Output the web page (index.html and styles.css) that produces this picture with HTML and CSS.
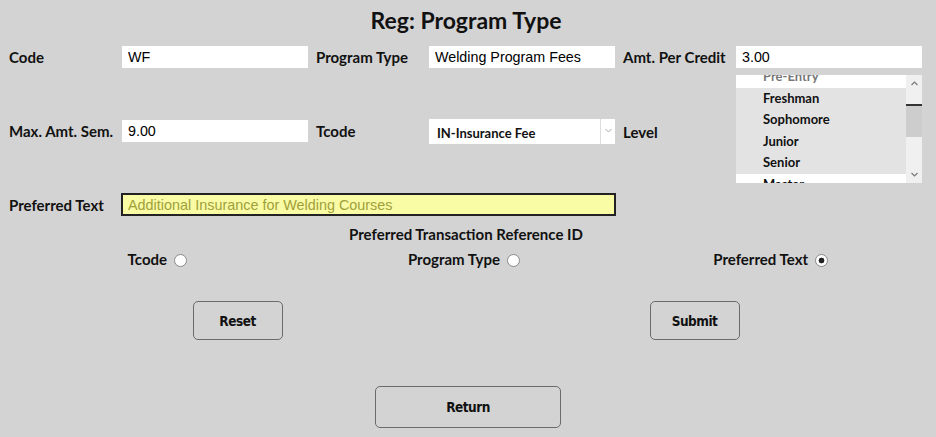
FILE: index.html
```html
<!DOCTYPE html>
<html lang="en">
<head>
    <meta charset="UTF-8">
    <meta name="viewport" content="width=device-width, initial-scale=1.0">
    <title>Reg: Program Type</title>
    <link rel="stylesheet" href="styles.css">
</head>
<body>
    <div class="page">
        <h1 class="title">Reg: Program Type</h1>

        <div class="form-row row-top">
            <div class="field">
                <label>Code</label>
                <input class="text-input" type="text" value="WF">
            </div>
            <div class="field">
                <label>Program Type</label>
                <input class="text-input" type="text" value="Welding Program Fees">
            </div>
            <div class="field">
                <label>Amt. Per Credit</label>
                <input class="text-input" type="text" value="3.00">
            </div>
        </div>

        <div class="form-row row-mid">
            <div class="field shifted">
                <label>Max. Amt. Sem.</label>
                <input class="text-input" type="text" value="9.00">
            </div>
            <div class="field shifted">
                <label>Tcode</label>
                <div class="select-box">
                    <span class="select-value">IN-Insurance Fee</span>
                    <span class="select-arrow">
                        <svg width="7" height="5" viewBox="0 0 7 5"><path d="M0.5 1 L3.5 4 L6.5 1" fill="none" stroke="#a8a8a8" stroke-width="1"/></svg>
                    </span>
                </div>
            </div>
            <div class="field">
                <label class="level-label">Level</label>
                <div class="listbox">
                    <div class="listbox-items">
                        <div class="listbox-track">
                            <div class="opt dim">Pre-Entry</div>
                            <div class="opt sel">Freshman</div>
                            <div class="opt sel">Sophomore</div>
                            <div class="opt sel">Junior</div>
                            <div class="opt sel">Senior</div>
                            <div class="opt">Master</div>
                        </div>
                    </div>
                    <div class="scrollbar">
                        <div class="scroll-btn">
                            <svg width="7" height="5" viewBox="0 0 7 5"><path d="M0.5 4 L3.5 1 L6.5 4" fill="none" stroke="#7a7a7a" stroke-width="1.2"/></svg>
                        </div>
                        <div class="scroll-track">
                            <div class="scroll-thumb"></div>
                        </div>
                        <div class="scroll-btn">
                            <svg width="7" height="5" viewBox="0 0 7 5"><path d="M0.5 1 L3.5 4 L6.5 1" fill="none" stroke="#7a7a7a" stroke-width="1.2"/></svg>
                        </div>
                    </div>
                </div>
            </div>
        </div>

        <div class="form-row row-pref">
            <div class="field field-wide">
                <label>Preferred Text</label>
                <input class="pref-input" type="text" value="Additional Insurance for Welding Courses">
            </div>
        </div>

        <div class="ref-title">Preferred Transaction Reference ID</div>

        <div class="radio-row">
            <label class="radio-item">Tcode <input type="radio" name="ref-id"></label>
            <label class="radio-item">Program Type <input type="radio" name="ref-id"></label>
            <label class="radio-item">Preferred Text <input type="radio" name="ref-id" checked></label>
        </div>

        <div class="button-row">
            <button class="btn">Reset</button>
            <button class="btn">Submit</button>
        </div>

        <div class="return-row">
            <button class="btn btn-return">Return</button>
        </div>
    </div>
</body>
</html>
```

FILE: styles.css
```css
body {
    margin: 0;
    background-color: #d3d3d3;
    font-family: Lato, "Noto Sans", sans-serif;
    color: #111;
}

.page {
    padding: 0 13px 0 9px;
}

.title {
    margin: 0;
    padding-top: 7px;
    padding-bottom: 1px;
    font-size: 23px;
    line-height: 26px;
    font-weight: bold;
    text-align: center;
}

.form-row {
    display: grid;
    grid-template-columns: repeat(3, 299px);
    column-gap: 8px;
}

.row-top {
    margin-top: 12px;
    height: 22px;
}

.row-mid {
    margin-top: 7px;
    height: 108px;
    align-items: center;
}

.row-pref {
    margin-top: 10px;
    grid-template-columns: 1fr;
}

.field {
    display: flex;
    align-items: center;
}

.field label {
    width: 113px;
    flex-shrink: 0;
    font-size: 15px;
    font-weight: bold;
}

.shifted {
    margin-top: 4px;
}

.level-label {
    margin-top: 6px;
}

.text-input {
    width: 186px;
    height: 22px;
    box-sizing: border-box;
    border: none;
    padding: 0 6px;
    background: #fff;
    font-family: "Liberation Sans", Arial, sans-serif;
    font-size: 14.3px;
    color: #000;
}

/* fake dropdown */
.select-box {
    display: flex;
    width: 186px;
    height: 25px;
    background: #fff;
}

.select-value {
    flex: 1;
    padding: 3px 0 0 8px;
    line-height: 22px;
    font-size: 13px;
    font-weight: bold;
}

.select-arrow {
    width: 14px;
    border-left: 1px solid #dcdcdc;
    display: flex;
    align-items: center;
    justify-content: center;
    padding-bottom: 2px;
}

/* fake multi-select list */
.listbox {
    display: flex;
    width: 186px;
    height: 108px;
    background: #fff;
}

.listbox-items {
    flex: 1;
    overflow: hidden;
}

.listbox-track {
    margin-top: -9px;
}

.opt {
    height: 21.5px;
    line-height: 21.5px;
    padding-left: 27px;
    font-size: 13px;
    font-weight: bold;
}

.opt.dim {
    color: #777;
}

.opt.sel {
    background: #e3e3e3;
}

.scrollbar {
    width: 16px;
    display: flex;
    flex-direction: column;
    background: #f0f0f0;
}

.scroll-btn {
    height: 17px;
    display: flex;
    align-items: center;
    justify-content: center;
}

.scroll-track {
    flex: 1;
}

.scroll-thumb {
    margin-top: 12px;
    height: 31px;
    background: #cdcdcd;
    border-top: 2px solid #333;
}

.pref-input {
    width: 495px;
    height: 23px;
    margin-left: -1px;
    box-sizing: border-box;
    border: 2px solid #222;
    padding: 0 5px;
    background: #f9fba5;
    color: #a0a03a;
    font-family: "Liberation Sans", Arial, sans-serif;
    font-size: 14.4px;
}

.ref-title {
    margin-top: 9px;
    line-height: 18px;
    font-size: 15px;
    font-weight: bold;
    text-align: center;
}

.radio-row {
    display: grid;
    grid-template-columns: repeat(3, 1fr);
    margin: 6px -1px 0 -5px;
    height: 20px;
}

.radio-item {
    display: flex;
    align-items: center;
    justify-content: center;
    gap: 7px;
    font-size: 15px;
    font-weight: bold;
}

.radio-item input {
    appearance: none;
    width: 13px;
    height: 13px;
    margin: 3px 0 0 0;
    border: 1px solid #8a8a8a;
    border-radius: 50%;
    background: #fff;
}

.radio-item input:checked {
    background: radial-gradient(circle, #222 0 2.6px, #fff 3.2px);
}

.button-row {
    display: grid;
    grid-template-columns: 1fr 1fr;
    justify-items: center;
    margin-top: 32px;
}

.btn {
    width: 90px;
    height: 39px;
    border: 1px solid #6b6b6b;
    border-radius: 5px;
    background: transparent;
    font-family: "Liberation Sans Narrow", "DejaVu Sans Condensed", sans-serif;
    font-size: 13.5px;
    letter-spacing: -0.5px;
    font-weight: bold;
    color: #111;
}

.return-row {
    margin-top: 46px;
    text-align: center;
    padding-left: 4px;
}

.btn-return {
    width: 186px;
    height: 42px;
}
```
